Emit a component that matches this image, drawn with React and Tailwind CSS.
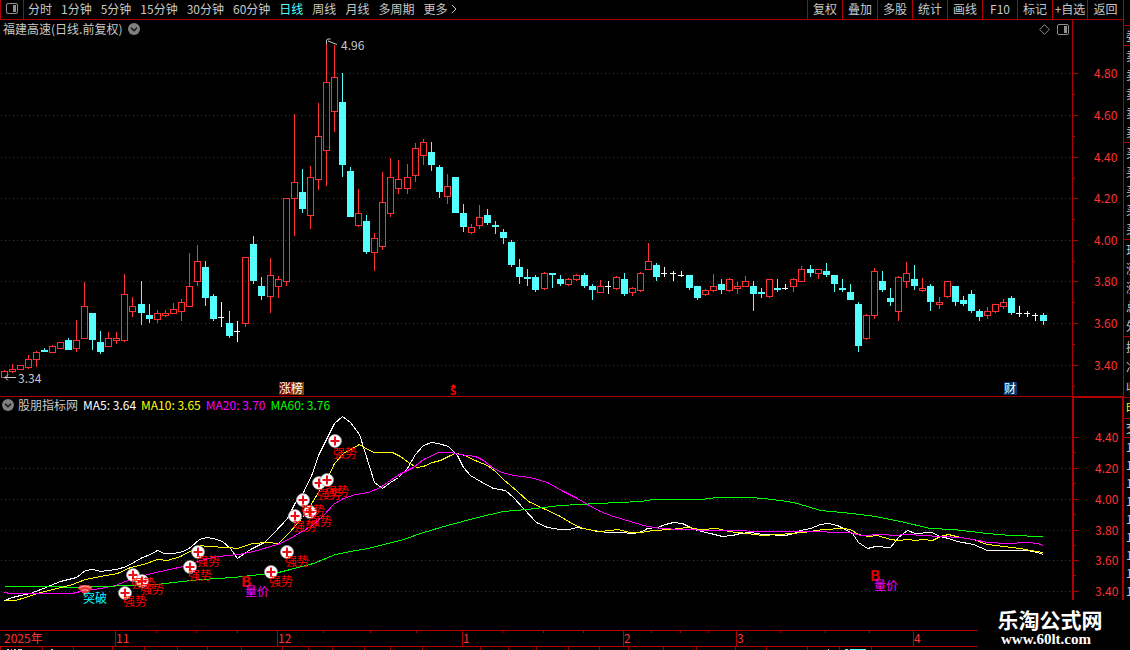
import React, { useState } from 'react';

const periods = ['分时', '1分钟', '5分钟', '15分钟', '30分钟', '60分钟', '日线', '周线', '月线', '多周期'];
const tools = ['复权', '叠加', '多股', '统计', '画线', 'F10', '标记', '+自选'];

// [x, high, bodyTop, bodyBottom, low, kind], kind: r = up, c = down, w = flat
const candles = [
    [4, 370, 371, 378, 378, 'r'], [12, 364, 369, 372, 373, 'r'], [20, 365, 365, 370, 370, 'r'],
    [28, 355, 359, 368, 369, 'r'], [36, 351, 352, 360, 367, 'r'], [44, 348, 350, 352, 352, 'c'],
    [52, 345, 346, 353, 353, 'r'], [60, 342, 342, 349, 349, 'r'], [68, 338, 340, 350, 350, 'c'],
    [76, 320, 340, 349, 352, 'r'], [84, 282, 306, 339, 339, 'r'], [92, 313, 313, 340, 350, 'c'],
    [100, 331, 342, 352, 354, 'c'], [108, 332, 338, 347, 347, 'r'], [116, 332, 338, 341, 344, 'r'],
    [124, 274, 294, 341, 342, 'r'], [132, 297, 306, 312, 317, 'r'], [141, 281, 304, 313, 325, 'c'],
    [149, 304, 315, 319, 323, 'c'], [157, 310, 313, 320, 323, 'r'], [165, 310, 313, 316, 317, 'r'],
    [173, 303, 309, 314, 314, 'r'], [181, 299, 302, 312, 321, 'r'], [189, 253, 286, 307, 307, 'r'],
    [197, 245, 261, 282, 286, 'r'], [205, 261, 267, 298, 306, 'c'], [213, 294, 296, 319, 321, 'c'],
    [221, 302, 317, 318, 327, 'w'], [229, 311, 323, 336, 338, 'c'], [237, 321, 331, 332, 342, 'w'],
    [245, 257, 257, 324, 327, 'r'], [253, 236, 244, 281, 284, 'c'], [261, 277, 286, 296, 300, 'c'],
    [270, 258, 275, 297, 313, 'r'], [278, 276, 279, 287, 298, 'r'], [286, 198, 198, 282, 286, 'r'],
    [294, 114, 182, 199, 236, 'r'], [302, 169, 192, 209, 213, 'c'], [310, 166, 177, 216, 229, 'r'],
    [318, 103, 136, 180, 190, 'r'], [326, 43, 82, 151, 186, 'r'], [334, 45, 77, 112, 132, 'r'],
    [342, 73, 102, 165, 177, 'c'], [350, 167, 171, 217, 217, 'c'], [358, 189, 213, 226, 227, 'r'],
    [366, 215, 221, 252, 254, 'c'], [374, 233, 238, 253, 271, 'r'], [382, 172, 202, 247, 250, 'r'],
    [390, 158, 177, 214, 217, 'r'], [398, 160, 179, 189, 194, 'r'], [407, 164, 177, 189, 194, 'r'],
    [415, 143, 148, 176, 182, 'r'], [423, 139, 142, 156, 165, 'r'], [431, 142, 152, 165, 171, 'c'],
    [439, 165, 167, 192, 198, 'c'], [447, 174, 186, 197, 204, 'r'], [455, 177, 177, 213, 213, 'c'],
    [463, 204, 213, 227, 232, 'c'], [471, 224, 227, 233, 234, 'r'], [479, 205, 217, 226, 229, 'r'],
    [487, 209, 215, 223, 225, 'c'], [495, 221, 225, 227, 234, 'c'], [503, 229, 232, 238, 244, 'c'],
    [511, 240, 242, 265, 267, 'c'], [519, 259, 267, 277, 284, 'c'], [527, 269, 277, 279, 286, 'c'],
    [535, 275, 277, 290, 292, 'c'], [544, 272, 273, 289, 290, 'r'], [552, 273, 273, 275, 288, 'c'],
    [560, 275, 279, 284, 286, 'c'], [568, 278, 279, 285, 286, 'r'], [576, 274, 275, 280, 281, 'r'],
    [584, 273, 275, 286, 288, 'c'], [592, 284, 286, 290, 300, 'c'], [600, 280, 286, 293, 293, 'r'],
    [608, 281, 286, 287, 294, 'w'], [616, 276, 277, 289, 290, 'r'], [624, 273, 279, 294, 296, 'c'],
    [632, 287, 288, 293, 296, 'r'], [640, 272, 273, 291, 292, 'r'], [648, 243, 261, 270, 270, 'r'],
    [656, 263, 265, 277, 281, 'c'], [664, 267, 273, 274, 277, 'w'], [673, 271, 273, 274, 281, 'w'],
    [681, 271, 275, 276, 277, 'w'], [689, 275, 275, 288, 290, 'c'], [697, 286, 286, 298, 300, 'c'],
    [705, 289, 290, 295, 296, 'r'], [713, 274, 286, 291, 292, 'r'], [721, 279, 284, 290, 294, 'c'],
    [729, 278, 279, 291, 292, 'r'], [737, 282, 286, 289, 294, 'r'], [745, 276, 281, 287, 287, 'r'],
    [753, 281, 286, 294, 311, 'c'], [761, 288, 292, 294, 298, 'c'], [769, 279, 279, 297, 298, 'r'],
    [777, 279, 288, 290, 292, 'c'], [785, 284, 288, 289, 290, 'w'], [793, 278, 279, 287, 292, 'r'],
    [801, 266, 269, 282, 282, 'r'], [810, 265, 269, 273, 277, 'c'], [818, 269, 269, 274, 279, 'r'],
    [826, 263, 271, 275, 277, 'c'], [834, 275, 275, 284, 292, 'c'], [842, 279, 288, 290, 292, 'c'],
    [850, 284, 292, 300, 300, 'c'], [858, 302, 304, 346, 352, 'c'], [866, 314, 315, 339, 340, 'r'],
    [874, 268, 271, 316, 319, 'r'], [882, 271, 281, 290, 292, 'c'], [890, 288, 298, 302, 306, 'c'],
    [898, 276, 277, 312, 321, 'r'], [906, 262, 273, 282, 288, 'r'], [914, 265, 279, 286, 290, 'c'],
    [922, 278, 288, 291, 292, 'r'], [930, 284, 286, 302, 311, 'c'], [939, 297, 302, 305, 309, 'r'],
    [947, 281, 281, 297, 298, 'r'], [955, 286, 286, 302, 306, 'c'], [963, 296, 300, 304, 306, 'c'],
    [971, 290, 294, 311, 313, 'c'], [979, 309, 311, 317, 321, 'c'], [987, 307, 311, 316, 319, 'r'],
    [995, 304, 304, 312, 313, 'r'], [1003, 299, 302, 307, 309, 'r'], [1011, 296, 298, 313, 315, 'c'],
    [1019, 306, 313, 314, 317, 'w'], [1027, 311, 313, 314, 317, 'w'], [1035, 313, 315, 316, 321, 'w'],
    [1043, 313, 315, 321, 325, 'c'],
];

// moving averages, same x axis as the candles
const averages = [
    {
        color: '#ffffff',
        points: '4,600 12,597 20,595 30,593 43,588 60,581 76,577 85,570 92,569 101,571 107,570 116,569 126,566 142,557 150,554 157,550 164,553 173,553 183,551 190,547 199,539 206,537 213,538 222,541 230,548 237,558 250,549 264,542 273,533 287,518 295,502 303,492 312,473 318,455 325,441 334,423 342,416 350,422 359,434 364,450 374,482 382,488 390,482 398,477 407,468 415,454 423,445 431,442 438,443 448,446 457,455 463,467 470,475 480,481 493,488 505,490 513,497 523,508 536,522 547,527 560,529 568,529 577,527 588,529 597,531 610,532 620,532 633,533 642,531 647,528 657,527 665,524 673,522 682,523 688,526 697,530 710,533 722,536 732,535 740,533 750,532 763,534 785,535 793,533 800,530 810,528 820,524 828,523 837,525 843,528 852,533 858,542 867,548 875,546 890,547 898,537 907,530 915,533 931,532 940,536 948,538 957,541 973,544 987,550 1027,550 1037,552 1043,554',
    },
    {
        color: '#ffff00',
        points: '4,600 15,600 25,597 40,592 57,588 72,584 85,579 100,576 117,573 130,567 143,564 157,559 167,560 180,556 197,547 200,545 207,546 227,547 237,548 252,543 267,542 278,543 288,533 297,523 302,517 310,505 318,492 327,478 334,463 343,453 352,448 359,444 367,449 374,452 392,452 400,456 408,462 416,467 423,466 432,462 440,460 450,455 455,453 462,454 477,461 487,465 495,471 503,479 517,491 528,501 543,508 560,516 573,524 583,528 593,530 600,531 610,530 617,529 630,532 640,532 653,530 670,529 687,527 700,529 717,528 728,531 747,533 762,535 778,534 803,532 823,529 842,528 850,529 858,534 868,536 877,535 890,539 898,540 908,539 915,540 923,539 932,540 940,536 948,534 960,537 973,539 987,544 1020,548 1030,550 1043,552',
    },
    {
        color: '#ff00ff',
        points: '4,592 10,593 72,593 80,591 100,588 115,585 130,579 147,574 160,571 183,566 200,560 217,556 238,554 253,551 277,544 288,539 300,532 312,525 323,515 333,504 343,498 355,494 368,492 380,487 397,475 413,467 423,459 438,452 450,452 460,454 475,456 483,460 493,468 502,472 513,475 530,477 547,482 563,491 577,498 587,504 600,511 613,516 630,521 643,525 660,528 680,529 713,530 780,531 803,531 850,532 860,535 883,534 893,535 907,534 940,536 960,537 973,539 987,542 1007,543 1027,542 1037,543 1043,545',
    },
    {
        color: '#00ff00',
        points: '4,586 57,586 67,587 103,586 127,585 157,584 173,582 200,579 233,577 260,574 278,572 290,569 313,563 335,554 350,551 367,548 380,545 403,539 423,532 447,525 477,517 503,511 527,509 543,507 560,505 597,503 640,501 653,499 700,499 717,497 750,497 763,498 780,500 793,502 807,506 820,510 852,513 875,516 900,521 930,528 953,529 987,533 1010,535 1043,536',
    },
];

// [marker x, marker y, label y]
const signals = [
    [125, 593, 606], [133, 575, 588], [142, 581, 594], [190, 567, 580], [198, 552, 566],
    [271, 572, 586], [287, 552, 566], [295, 516, 531], [303, 500, 515], [310, 512, 526],
    [319, 483, 499], [327, 480, 496], [335, 441, 458],
];

const legend = [
    { label: 'MA5: 3.64', tone: 'text-white' },
    { label: 'MA10: 3.65', tone: 'text-[#ffff00]' },
    { label: 'MA20: 3.70', tone: 'text-[#ff00ff]' },
    { label: 'MA60: 3.76', tone: 'text-[#00ff00]' },
];

const priceLevels = [[73, '4.80'], [115, '4.60'], [157, '4.40'], [198, '4.20'], [240, '4.00'], [281, '3.80'], [323, '3.60'], [365, '3.40']];
const averageLevels = [[437, '4.40'], [468, '4.20'], [499, '4.00'], [530, '3.80'], [560, '3.60'], [591, '3.40']];

const months = [[115, '11'], [277, '12'], [462, '1'], [623, '2'], [736, '3'], [913, '4']];
const weekTicks = [156, 196, 237, 323, 370, 416, 502, 543, 583, 651, 680, 708, 780, 825, 869];
const footerTicks = [0, 42, 73, 112, 144, 177, 207, 241, 282, 308, 332, 364, 390, 422, 480, 508, 536, 568, 599, 628, 663, 696, 735, 766, 807, 839, 871];

const candleColors = { r: '#ff3232', c: '#54ffff', w: '#ffffff' };

const Candle = ({ data }) => {
    const [x, high, top, bottom, low, kind] = data;
    const color = candleColors[kind];
    if (kind === 'r') {
        return (
            <g fill={color}>
                <rect x={x} y={high} width="1" height={top - high} />
                <rect x={x} y={bottom} width="1" height={low - bottom} />
                <rect x={x - 2.5} y={top + 0.5} width="6" height={bottom - top - 1} fill="none" stroke={color} />
            </g>
        );
    }
    return (
        <g fill={color}>
            <rect x={x} y={high} width="1" height={low - high} />
            <rect x={x - 3} y={top} width={kind === 'w' ? 6 : 7} height={bottom - top} />
        </g>
    );
};

const GridLines = ({ levels }) => levels.map(([y]) => (
    <line key={y} x1="1" x2="100%" y1={y + 0.5} y2={y + 0.5} stroke="#b00000" strokeDasharray="1 3" />
));

const AxisScale = ({ levels, minor }) => levels.map(([y, label]) => (
    <g key={label}>
        <rect x="0" y={y} width="5" height="1" fill="#b00000" />
        <rect x="0" y={y + minor} width="2" height="1" fill="#b00000" />
        <text x="21" y={y + 5} fontSize="12" fill="#ff3232">{label}</text>
    </g>
));

const ChevronBadge = () => (
    <svg width="12" height="12" viewBox="0 0 12 12" aria-hidden="true">
        <circle cx="6" cy="6" r="6" fill="#808080" />
        <path d="M3 4.7 6 7.7l3-3" fill="none" stroke="#111" strokeWidth="1.4" />
    </svg>
);

const PanelIcon = () => (
    <svg width="12" height="11" viewBox="0 0 12 11" aria-hidden="true">
        <rect x="0.5" y="0.5" width="11" height="10" rx="1.5" fill="none" stroke="#909090" />
        <rect x="7" y="2" width="3" height="7" fill="#909090" />
    </svg>
);

const Signal = ({ x, y }) => (
    <g>
        <circle cx={x} cy={y} r="6.5" fill="#fff" stroke="#999" strokeWidth="0.7" />
        <path d={`M${x - 4.5} ${y}h9M${x} ${y - 4.5}v9`} stroke="#e8101c" strokeWidth="2" />
    </g>
);

const PriceChart = () => (
    <svg className="block w-full h-[358px]" role="img" aria-label="日线">
        <g transform="translate(0 -38)" fontSize="12">
            <GridLines levels={priceLevels} />
            <g shapeRendering="crispEdges">
                {candles.map((item) => <Candle key={item[0]} data={item} />)}
            </g>
            <path d="M326.5 44v-3.500l1-1.500h3M328 41l9 3.500M4 377.500h12M8 374.500l-3 3 3 3" fill="none" stroke="#c8c8c8" />
            <text x="341" y="50" fill="#c8c8c8">4.96</text>
            <text x="18" y="383" fill="#c8c8c8">3.34</text>
            <rect x="279" y="382" width="12" height="13" fill="#800000" />
            <rect x="291" y="382" width="13" height="13" fill="#804000" />
            <text x="279" y="393" fill="#fff">涨榜</text>
            <rect x="1004" y="382" width="13" height="13" fill="#003870" />
            <text x="1004" y="393" fill="#fff">财</text>
            <path d="M450.500 387 453.500 384l3 3z" fill="#ff0000" />
            <text x="450" y="395" fontSize="10" fontWeight="700" fill="#ff0000">S</text>
        </g>
    </svg>
);

const AverageChart = () => (
    <svg className="block w-full h-[216px]" role="img" aria-label="股朋指标网">
        <g transform="translate(0 -414)" fontSize="12">
            <GridLines levels={averageLevels} />
            <g shapeRendering="crispEdges" fill="none">
                {averages.map(({ color, points }) => (
                    <polyline key={color} points={points} stroke={color} transform="translate(0.5 0.5)" />
                ))}
            </g>
            {signals.map(([x, y]) => <Signal key={x} x={x} y={y} />)}
            {signals.map(([x, , labelY]) => <text key={x} x={x - 2} y={labelY} fill="#ff0000">强势</text>)}
            <path d="M77.500 588 81 585h8l3.500 3-7.500 7.500z" fill="#e83838" />
            <path d="M79 587.500q6-3 12 0M82 590.500q3-1.500 6 0" fill="none" stroke="#ffb0b0" />
            <text x="83" y="603" fill="#00ffff">突破</text>
            <text x="241" y="587" fontSize="15" fontWeight="700" fill="#e00000">B</text>
            <text x="245" y="596" fill="#ff00ff">量价</text>
            <text x="870" y="581" fontSize="15" fontWeight="700" fill="#e00000">B</text>
            <text x="874" y="590" fill="#ff00ff">量价</text>
        </g>
    </svg>
);

const TimeAxis = () => (
    <svg className="block w-full h-5" role="img" aria-label="时间轴" fontSize="12" fill="#b00000">
        <rect x="0" y="0" width="100%" height="1" />
        <rect x="0" y="16" width="100%" height="1" />
        {weekTicks.map((x) => <rect key={x} x={x} y="1" width="1" height="2" />)}
        {footerTicks.map((x) => <rect key={x} x={x} y="17" width="1" height="3" />)}
        <text x="4" y="13" fill="#ff3232">2025年</text>
        {months.map(([x, label]) => (
            <g key={x}>
                <rect x={x} y="0" width="1" height="16" />
                <text x={x + 1} y="13" fill="#ff3232">{label}</text>
            </g>
        ))}
        <path d="M7 19.500h2M11 19.500h1M14 19.500h2M18 19.500h4M51 19.500h2M828 19.500h1" stroke="#c8c8c8" />
        <path d="M845 19.500h3M850 19.500h16" stroke="#54ffff" />
    </svg>
);

const QuoteGroup = ({ rows, className }) => (
    <div className={`flex flex-col justify-around border-b border-[#b00000] pl-[2px] overflow-hidden ${className}`}>
        {rows.map((row, i) => <span key={i} className="leading-4 whitespace-nowrap">{row}</span>)}
    </div>
);

const QuoteStrip = () => (
    <aside className="w-[7px] shrink-0 overflow-hidden border-l border-[#b00000]">
        <div className="h-[26px] border-b border-[#b00000]" />
        <QuoteGroup className="h-5" rows={['委']} />
        <QuoteGroup className="h-[97px]" rows={['卖', '卖', '卖', '卖', '卖']} />
        <QuoteGroup className="h-[97px]" rows={['买', '买', '买', '买', '买']} />
        <QuoteGroup className="h-[97px]" rows={['现', '涨', '涨', '总', '外']} />
        <QuoteGroup className="h-[61px]" rows={['换', '净', '收']} />
        <QuoteGroup className="h-[21px] text-[#ffff00]" rows={['明']} />
        <QuoteGroup className="h-[19px]" rows={['交']} />
        <div className="flex flex-col pl-[2px] leading-[18px]">
            {Array.from({ length: 9 }, (_, i) => <span key={i}>14</span>)}
        </div>
    </aside>
);

const App = () => {
    const [period, setPeriod] = useState('日线');

    return (
        <div className="relative flex min-h-screen overflow-hidden bg-black text-xs text-[#c8c8c8] font-['Noto_Sans_CJK_SC',sans-serif]">
            <main className="flex-1 min-w-0">
                <header className="flex h-5 justify-between border-b border-[#b00000] whitespace-nowrap">
                    <nav className="flex">
                        <button className="flex w-6 items-center justify-center border-x border-[#b00000] pb-0.5" title="侧栏">
                            <PanelIcon />
                        </button>
                        <div className="flex items-center gap-[9px] pl-1 pb-0.5">
                            {periods.map((name) => (
                                <button
                                    key={name}
                                    onClick={() => setPeriod(name)}
                                    className={name === period ? 'text-[#54ffff]' : 'hover:text-white'}
                                >
                                    {name}
                                </button>
                            ))}
                            <button className="flex items-center gap-1">
                                更多
                                <svg width="6" height="10" viewBox="0 0 6 10" aria-hidden="true">
                                    <path d="M1 1l4 4-4 4" fill="none" stroke="currentColor" />
                                </svg>
                            </button>
                        </div>
                    </nav>
                    <div className="flex">
                        {tools.map((name) => (
                            <button key={name} className="w-[35px] border-l border-[#b00000] pb-0.5 hover:text-white">{name}</button>
                        ))}
                        <button className="w-9 border-l border-[#b00000] pb-0.5 hover:text-white">返回</button>
                    </div>
                </header>

                <section className="flex">
                    <div className="flex-1 min-w-0">
                        <div className="flex h-[18px] items-center justify-between px-[3px]">
                            <h1 className="flex items-center gap-1.5">
                                福建高速(日线.前复权)
                                <ChevronBadge />
                            </h1>
                            <div className="flex items-center gap-[7px]">
                                <svg width="11" height="11" viewBox="0 0 11 11" aria-hidden="true">
                                    <path d="M5.500.7l4.800 4.800-4.800 4.800L.7 5.500z" fill="none" stroke="#909090" />
                                </svg>
                                <PanelIcon />
                            </div>
                        </div>
                        <PriceChart />
                    </div>
                    <div className="w-[51px] border-l border-[#b00000]">
                        <svg className="block h-[376px] w-full" role="img" aria-label="价格">
                            <g transform="translate(0 -20)">
                                <AxisScale levels={priceLevels} minor={21} />
                            </g>
                        </svg>
                    </div>
                </section>

                <section className="flex border-t border-[#b00000]">
                    <div className="flex-1 min-w-0">
                        <div className="flex h-[17px] items-center gap-[5px] pl-[2px] pb-0.5 whitespace-nowrap">
                            <h2 className="flex items-center gap-1">
                                <ChevronBadge />
                                股朋指标网
                            </h2>
                            {legend.map(({ label, tone }) => <span key={label} className={tone}>{label}</span>)}
                        </div>
                        <AverageChart />
                    </div>
                    <div className="w-[51px] border-t border-r border-l-2 border-[#b00000]">
                        <svg className="block h-[232px] w-full" role="img" aria-label="均线价格">
                            <g transform="translate(0 -398)">
                                <AxisScale levels={averageLevels} minor={15} />
                            </g>
                        </svg>
                    </div>
                </section>

                <TimeAxis />
            </main>

            <QuoteStrip />

            <footer className="absolute right-0 bottom-0 flex h-[50px] w-[152px] flex-col items-center bg-black pt-2 pr-2 text-white">
                <strong className="text-[21px] leading-[22px]">乐淘公式网</strong>
                <a href="#" className="pr-2 text-[15px] leading-[18px] font-bold font-['Liberation_Serif',serif]">www.60lt.com</a>
            </footer>
        </div>
    );
};

export default App;
